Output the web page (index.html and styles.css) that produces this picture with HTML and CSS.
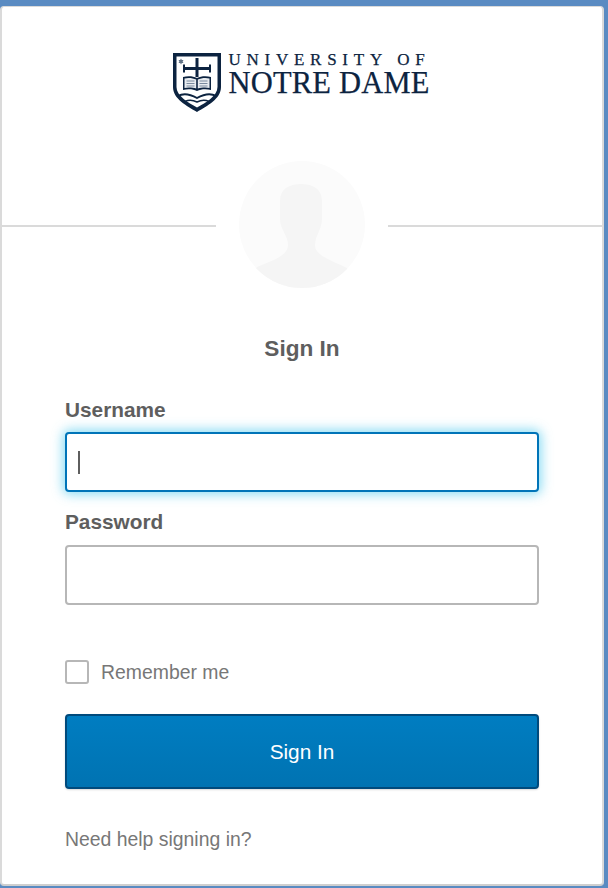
FILE: index.html
```html
<!DOCTYPE html>
<html lang="en">
<head>
<meta charset="utf-8">
<title>Sign In</title>
<link rel="stylesheet" href="styles.css">
</head>
<body>
<main class="card">
  <header class="logo-row">
    <div class="logo">
      <svg class="shield" width="48" height="59" viewBox="0 0 48 59" aria-hidden="true">
        <path d="M0 0H48V34C48 46 34 53 24 59C14 53 0 46 0 34Z" fill="#0c2340"/>
        <path d="M3.500 3.500H44.500V34C44.500 43 33 49.500 24 54.500C15 49.500 3.500 43 3.500 34Z" fill="#fff"/>
        <path d="M22.500 5H25.500V14H36V11.500H38V19.500H36V17H25.500V24H22.500V17H12V19.500H10V11.500H12V14H22.500Z" fill="#0c2340"/>
        <path d="M10 24C15 22.500 20 23 24 25C28 23 33 22.500 38 24V37C33 35.500 28 36 24 38C20 36 15 35.500 10 37Z" fill="#0c2340"/>
        <path d="M11.500 25.500C15 24.500 20 25 23.200 26.500V35.500C20 34.500 15 34 11.500 35Z" fill="#e8ecf0"/>
        <path d="M36.500 25.500C33 24.500 28 25 24.800 26.500V35.500C28 34.500 33 34 36.500 35Z" fill="#e8ecf0"/>
        <path d="M13.500 28H21.500M13.500 30.500H21.500M13.500 33H21.500M26.500 28H34.500M26.500 30.500H34.500M26.500 33H34.500" stroke="#7a8a9e" stroke-width="1"/>
        <path d="M5 43C10 40 17 41 24 45C31 41 38 40 43 43" fill="none" stroke="#0c2340" stroke-width="2"/>
        <path d="M12 48.500C16 46.500 20 47 24 49C28 47 32 46.500 36 48.500" fill="none" stroke="#0c2340" stroke-width="1.500"/>
        <path d="M8 5.500L10.500 10H5.500ZM8 11.500L5.500 7H10.500Z" fill="#5f7186"/>
      </svg>
      <div class="wordmark">
        <span class="word-top">UNIVERSITY OF</span>
        <span class="word-main">NOTRE DAME</span>
      </div>
    </div>
  </header>

  <div class="divider">
    <div class="avatar-gap">
      <svg class="avatar" width="126" height="127" viewBox="0 0 126 127" aria-hidden="true">
        <defs><clipPath id="avatar-clip"><ellipse cx="63" cy="63.500" rx="63" ry="63.500"/></clipPath></defs>
        <ellipse cx="63" cy="63.500" rx="63" ry="63.500" fill="#fbfbfb"/>
        <path clip-path="url(#avatar-clip)" d="M62 23C50 23 41 28 41 40V58C41 68 49 75 49 84C49 95 32 100 18 106L0 127H126L108 107C94 100 76 95 76 84C76 75 83 68 83 58V40C83 28 74 23 62 23Z" fill="#f5f5f5"/>
      </svg>
    </div>
  </div>

  <form class="form">
    <h1 class="title">Sign In</h1>
    <div class="field">
      <label class="label" for="username">Username</label>
      <div class="input input-focus" id="username"><span class="caret"></span></div>
    </div>
    <div class="field field-next">
      <label class="label" for="password">Password</label>
      <div class="input" id="password"></div>
    </div>
    <div class="remember">
      <span class="checkbox"></span>
      <span class="remember-text">Remember me</span>
    </div>
    <button class="submit" type="button">Sign In</button>
    <a class="help" href="#">Need help signing in?</a>
  </form>
</main>
</body>
</html>
```
FILE: styles.css
```css
html, body {
  margin: 0;
  padding: 0;
}

body {
  width: 608px;
  height: 888px;
  overflow: hidden;
  background: #5a8bc2;
  font-family: "Liberation Sans", Arial, sans-serif;
}

.card {
  box-sizing: border-box;
  width: 604px;
  height: 880px;
  margin-top: 6px;
  background: #fff;
  border: 2px solid #dadada;
  border-top-width: 1px;
  border-bottom-color: #cfcfcf;
  border-radius: 4px;
}

.logo-row {
  display: flex;
  justify-content: center;
  padding-top: 46px;
}

.logo {
  display: flex;
  gap: 7px;
  height: 59px;
}

.wordmark {
  display: flex;
  flex-direction: column;
  font-family: "Liberation Serif", "Times New Roman", serif;
  color: #0c2340;
  white-space: nowrap;
  -webkit-text-stroke: 0.250px #0c2340;
}

.word-top {
  font-size: 17px;
  line-height: 18px;
  letter-spacing: 5.750px;
  margin-top: -2px;
}

.word-main {
  font-size: 30.500px;
  line-height: 24px;
  letter-spacing: 0.200px;
  margin-top: 2px;
}

.divider {
  display: flex;
  justify-content: center;
  height: 127px;
  margin-top: 49px;
  background: linear-gradient(#dadada, #dadada) 0 64px / 100% 2px no-repeat;
}

.avatar-gap {
  display: flex;
  justify-content: center;
  width: 172px;
  background: #fff;
}

.form {
  display: flex;
  flex-direction: column;
  padding: 0 63px;
}

.title {
  margin: 47px 0 0;
  height: 28px;
  font-size: 22.600px;
  line-height: 28px;
  font-weight: 700;
  text-align: center;
  color: #5e5e5e;
}

.field {
  display: flex;
  flex-direction: column;
  margin-top: 34px;
}

.field-next {
  margin-top: 17px;
}

.label {
  height: 26px;
  margin-bottom: 9px;
  font-size: 20.800px;
  line-height: 26px;
  font-weight: 700;
  color: #5e5e5e;
}

.field-next .label {
  margin-bottom: 10px;
}

.input {
  box-sizing: border-box;
  display: flex;
  align-items: center;
  height: 60px;
  padding-left: 11px;
  background: #fff;
  border: 2px solid #b7b7b7;
  border-radius: 4px;
}

.input-focus {
  border-color: #0074b8;
  box-shadow: 0 0 12px 2px rgba(81, 203, 238, 0.700);
}

.caret {
  width: 2px;
  height: 23px;
  background: #5e5e5e;
}

.remember {
  display: flex;
  align-items: center;
  gap: 12px;
  margin-top: 54px;
  height: 26px;
}

.checkbox {
  box-sizing: border-box;
  width: 24px;
  height: 24px;
  border: 2px solid #b7b7b7;
  border-radius: 3px;
  background: #fff;
}

.remember-text {
  font-size: 19.400px;
  line-height: 26px;
  color: #777;
}

.submit {
  box-sizing: border-box;
  height: 75px;
  margin-top: 29px;
  padding: 0;
  border: 2px solid #004a7c;
  border-radius: 4px;
  background: linear-gradient(#007dc1, #0073b2);
  box-shadow: 0 1px 2px rgba(0, 0, 0, 0.150);
  color: #fff;
  font-family: inherit;
  font-size: 20.800px;
}

.help {
  margin-top: 37px;
  font-size: 19.400px;
  line-height: 26px;
  color: #777;
  text-decoration: none;
}
```
